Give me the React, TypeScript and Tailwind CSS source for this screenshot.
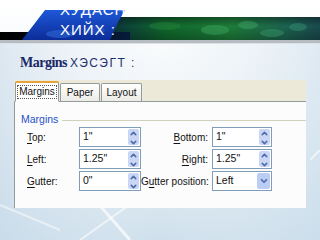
import { ChevronDown, ChevronUp } from "lucide-react"

const ui = { fontFamily: '"Liberation Sans", Arial, sans-serif' }

function Label({ text, keyIdx }: { text: string; keyIdx: number }) {
  return (
    <span>
      {text.slice(0, keyIdx)}
      <span className="underline underline-offset-2">{text[keyIdx]}</span>
      {text.slice(keyIdx + 1)}
    </span>
  )
}

function Spin({ value, w }: { value: string; w: string }) {
  return (
    <div className={`${w} h-[20px] flex items-stretch border border-[#7f9db9] bg-white`}>
      <div className="flex-1 flex items-center pl-[3px] text-[10.5px] text-[#111]">{value}</div>
      <div className="w-[11px] my-[1px] mr-[1px] flex flex-col rounded-[2px] bg-[#c9d6f5]">
        <div className="flex-1 flex items-center justify-center">
          <ChevronUp className="w-[9px] h-[9px] text-[#4d6aa8]" strokeWidth={4} />
        </div>
        <div className="flex-1 flex items-center justify-center">
          <ChevronDown className="w-[9px] h-[9px] text-[#4d6aa8]" strokeWidth={4} />
        </div>
      </div>
    </div>
  )
}

function Select({ value, w }: { value: string; w: string }) {
  return (
    <div className={`${w} h-[20px] flex items-stretch border border-[#7f9db9] bg-white`}>
      <div className="flex-1 flex items-center pl-[3px] text-[10.5px] text-[#111]">{value}</div>
      <div className="w-[13px] my-[1px] mr-[1px] flex items-center justify-center rounded-[2px] bg-[#bccdf5]">
        <ChevronDown className="w-[10px] h-[10px] text-[#4d6aa8]" strokeWidth={4} />
      </div>
    </div>
  )
}

export default function App() {
  return (
    <div
      className="relative w-[320px] h-[240px] overflow-hidden bg-gradient-to-b from-[#ffffff] via-[#eef3f7] to-[#cfe0ec]"
      style={ui}
    >
      {/* faint background streaks */}
      <svg className="absolute inset-0" width="320" height="240" viewBox="0 0 320 240">
        <defs>
          <linearGradient id="bgl" x1="0" y1="0" x2="1" y2="0">
            <stop offset="0" stopColor="#c4d8e8" stopOpacity="0.9" />
            <stop offset="0.5" stopColor="#e8f0f6" stopOpacity="0" />
            <stop offset="1" stopColor="#c8dcea" stopOpacity="0.9" />
          </linearGradient>
        </defs>
        <rect x="0" y="44" width="320" height="196" fill="url(#bgl)" opacity="0.6" />
        <path d="M60 160 L130 240" stroke="#ffffff" strokeWidth="3" opacity="0.7" />
        <path d="M150 190 L80 240" stroke="#ffffff" strokeWidth="2" opacity="0.6" />
        <path d="M310 160 L320 150" stroke="#ffffff" strokeWidth="2" opacity="0.6" />
        <path d="M0 205 L60 230" stroke="#ffffff" strokeWidth="2" opacity="0.5" />
      </svg>

      {/* banner */}
      <div className="relative h-[44px] flex flex-col">
        <svg className="absolute inset-0" width="320" height="44" viewBox="0 0 320 44">
          <defs>
            <linearGradient id="grn" x1="0" y1="0" x2="1" y2="0">
              <stop offset="0" stopColor="#0b2a40" />
              <stop offset="0.3" stopColor="#10682c" />
              <stop offset="0.6" stopColor="#1e7c3a" />
              <stop offset="0.85" stopColor="#1c6250" />
              <stop offset="1" stopColor="#1a4a4e" />
            </linearGradient>
            <linearGradient id="grnv" x1="0" y1="0" x2="0" y2="1">
              <stop offset="0" stopColor="#000" stopOpacity="0.35" />
              <stop offset="0.4" stopColor="#000" stopOpacity="0" />
              <stop offset="1" stopColor="#000" stopOpacity="0.25" />
            </linearGradient>
            <linearGradient id="blu" x1="0" y1="0" x2="0" y2="1">
              <stop offset="0" stopColor="#1e58d8" />
              <stop offset="1" stopColor="#0b2c98" />
            </linearGradient>
            <linearGradient id="blk" x1="0" y1="0" x2="1" y2="0">
              <stop offset="0" stopColor="#000000" />
              <stop offset="1" stopColor="#071a3a" />
            </linearGradient>
          </defs>
          <rect x="100" y="17" width="220" height="23" fill="url(#grn)" />
          <rect x="100" y="17" width="220" height="23" fill="url(#grnv)" />
          <ellipse cx="215" cy="30" rx="14" ry="5" fill="#3fa860" opacity="0.45" />
          <ellipse cx="248" cy="25" rx="10" ry="4" fill="#47b070" opacity="0.4" />
          <ellipse cx="272" cy="33" rx="12" ry="4" fill="#3a9a6a" opacity="0.45" />
          <ellipse cx="298" cy="27" rx="9" ry="4" fill="#3a9a78" opacity="0.4" />
          <ellipse cx="165" cy="26" rx="16" ry="4" fill="#2a9040" opacity="0.35" />
          <rect x="0" y="32" width="130" height="8" fill="url(#blk)" />
          <polygon points="45,10 125,10 118,22 110,40 22,40" fill="url(#blu)" />
          <ellipse cx="60" cy="34" rx="14" ry="4" fill="#3a78e8" opacity="0.45" />
          <ellipse cx="95" cy="30" rx="10" ry="4" fill="#3a70e0" opacity="0.35" />
          <rect x="0" y="40" width="320" height="3" fill="#b6bcc2" />
          <rect x="0" y="43" width="320" height="1" fill="#dde2e6" />
        </svg>
        <div className="relative pl-[60px] text-[15px] leading-[20px] tracking-[1px] text-white">
          <div>ХУДАСНЫ ТОХИРГОО</div>
          <div>ХИЙХ :</div>
        </div>
      </div>

      {/* heading */}
      <div className="relative flex items-baseline gap-[3px] pl-[20px] pt-[8px] h-[34px]">
        <span
          className="text-[14px] font-bold text-[#1a2766] tracking-[-0.5px]"
          style={{ fontFamily: '"Liberation Serif", "Times New Roman", serif' }}
        >
          Margins
        </span>
        <span className="text-[12px] tracking-[1.5px] text-[#1f2f70]">ХЭСЭГТ :</span>
      </div>

      {/* dialog */}
      <div className="relative ml-[14px] w-[292px] mt-[2px] text-[10px] text-[#111]">
        <div className="flex items-end h-[22px] bg-[#ece9d8] pl-[1px] border-b border-[#919b9c]">
          <div className="h-[21px] w-[44px] mb-[-1px] flex items-center justify-center bg-white border border-[#919b9c] border-b-white border-t-2 border-t-[#e8a43c] rounded-t-[2px]">
            <span className="border border-dotted border-[#555] px-[1px] leading-[12px]">Margins</span>
          </div>
          <div className="h-[18px] w-[40px] ml-[1px] flex items-center justify-center bg-gradient-to-b from-white to-[#ecebe5] border border-[#919b9c] border-b-0 rounded-t-[2px]">
            Paper
          </div>
          <div className="h-[18px] w-[41px] ml-[1px] flex items-center justify-center bg-gradient-to-b from-white to-[#ecebe5] border border-[#919b9c] border-b-0 rounded-t-[2px]">
            Layout
          </div>
        </div>
        <div className="bg-[#fcfcfd] border-l border-[#919b9c] h-[106px] pl-[6px] pt-[11px]">
          <div className="flex items-center gap-[4px] h-[14px] text-[10.5px]">
            <span className="text-[#1f52c8]">Margins</span>
            <div className="flex-1 h-px bg-[#d0d0bf]" />
          </div>
          <div className="grid grid-cols-[58px_62px_71px_60px] gap-y-[2px] items-center">
            <div className="pl-[6px]"><Label text="Top:" keyIdx={0} /></div>
            <Spin value={'1"'} w="w-[62px]" />
            <div className="text-right pr-[4px]"><Label text="Bottom:" keyIdx={0} /></div>
            <Spin value={'1"'} w="w-[60px]" />

            <div className="pl-[6px]"><Label text="Left:" keyIdx={0} /></div>
            <Spin value={'1.25"'} w="w-[62px]" />
            <div className="text-right pr-[4px]"><Label text="Right:" keyIdx={0} /></div>
            <Spin value={'1.25"'} w="w-[60px]" />

            <div className="pl-[6px]"><Label text="Gutter:" keyIdx={0} /></div>
            <Spin value={'0"'} w="w-[62px]" />
            <div className="text-right pr-[4px] whitespace-nowrap"><Label text="Gutter position:" keyIdx={1} /></div>
            <Select value="Left" w="w-[60px]" />
          </div>
        </div>
      </div>
    </div>
  )
}
